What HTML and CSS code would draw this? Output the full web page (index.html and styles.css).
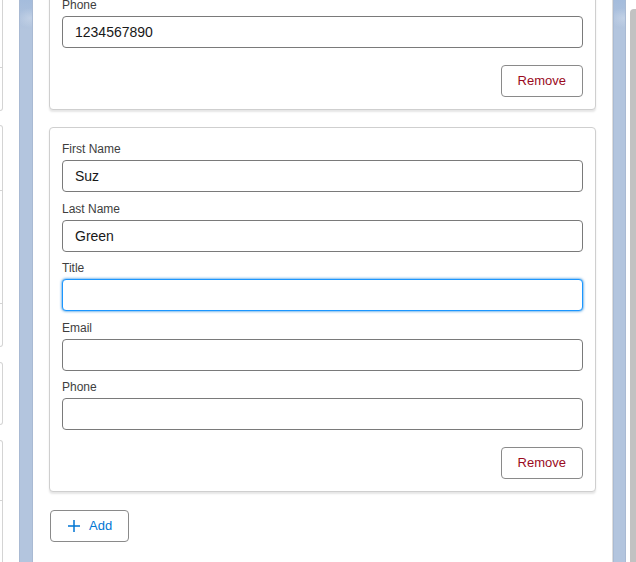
FILE: index.html
```html
<!DOCTYPE html>
<html lang="en">

<head>
    <meta charset="UTF-8">
    <meta name="viewport" content="width=device-width, initial-scale=1.0">
    <title>Contacts</title>
    <link rel="stylesheet" href="styles.css">
</head>

<body>
    <!-- clipped column on the left -->
    <div class="stubs">
        <div class="stub stub-a">
            <div class="stub-row" style="height: 77px"></div>
        </div>
        <div class="stub stub-b">
            <div class="stub-row" style="height: 65px"></div>
            <div class="stub-row" style="height: 113px"></div>
        </div>
        <div class="stub stub-c"></div>
        <div class="stub stub-d">
            <div class="stub-row" style="height: 60px"></div>
        </div>
    </div>
    <div class="strip"></div>

    <div class="panel">
        <div class="panel-inner">
            <div class="card">
                <div class="field">
                    <label class="label">First Name</label>
                    <input class="input" type="text" value="">
                </div>
                <div class="field">
                    <label class="label">Last Name</label>
                    <input class="input" type="text" value="">
                </div>
                <div class="field">
                    <label class="label">Title</label>
                    <input class="input" type="text" value="">
                </div>
                <div class="field">
                    <label class="label">Email</label>
                    <input class="input" type="text" value="">
                </div>
                <div class="field">
                    <label class="label">Phone</label>
                    <input class="input" type="text" value="1234567890">
                </div>
                <div class="actions">
                    <button class="btn btn-remove">Remove</button>
                </div>
            </div>

            <div class="card">
                <div class="field">
                    <label class="label">First Name</label>
                    <input class="input" type="text" value="Suz">
                </div>
                <div class="field">
                    <label class="label">Last Name</label>
                    <input class="input" type="text" value="Green">
                </div>
                <div class="field">
                    <label class="label">Title</label>
                    <input class="input focus" type="text" value="">
                </div>
                <div class="field">
                    <label class="label">Email</label>
                    <input class="input" type="text" value="">
                </div>
                <div class="field">
                    <label class="label">Phone</label>
                    <input class="input" type="text" value="">
                </div>
                <div class="actions">
                    <button class="btn btn-remove">Remove</button>
                </div>
            </div>

            <button class="btn btn-add">
                <svg class="btn-icon" width="14" height="14" viewBox="0 0 14 14">
                    <path d="M7 1v12M1 7h12" stroke="#0176d3" stroke-width="1.5" fill="none" />
                </svg>
                Add
            </button>
        </div>
    </div>

    <div class="strip strip-right"></div>
    <div class="gutter"></div>
    <div class="scroll"></div>
</body>

</html>
```
FILE: styles.css
```css
* {
    margin: 0;
    padding: 0;
    box-sizing: border-box;
}

html,
body {
    height: 100%;
}

body {
    display: flex;
    overflow: hidden;
    background-color: #fff;
    font-family: "Liberation Sans", Arial, sans-serif;
    color: #181818;
}

/* left clipped column */
.stubs {
    width: 19px;
    flex-shrink: 0;
    overflow: hidden;
    display: flex;
    flex-direction: column;
}

.stub {
    width: 3px;
    flex-shrink: 0;
    border: 1px solid #d4d4d4;
    border-left: 0;
    border-radius: 0 4px 4px 0;
}

.stub-row {
    border-bottom: 1px solid #d4d4d4;
}

.stub-a {
    margin-top: -10px;
    height: 121px;
}

.stub-b {
    margin-top: 14px;
    height: 222px;
}

.stub-c {
    margin-top: 15px;
    height: 63px;
}

.stub-d {
    margin-top: 15px;
    height: 200px;
}

.strip {
    width: 14px;
    flex-shrink: 0;
    background-color: #b3c5de;
    background-image:
        radial-gradient(ellipse 14px 10px at 80% 18px, rgba(255, 255, 255, 0.25), transparent),
        linear-gradient(180deg, #a4bcdc 0, #b3c5de 30px, #b3c5de 100%);
    box-shadow: inset 1px 0 0 #a9bad3, inset -1px 0 0 #a9bad3;
}

.strip-right {
    width: 13px;
}

.gutter {
    width: 4px;
    flex-shrink: 0;
    background-color: #fff;
}

.scroll {
    flex: 1;
    margin-top: 9px;
    background-color: #c2c2c2;
    border-top-left-radius: 4px;
}

/* main panel */
.panel {
    width: 580px;
    flex-shrink: 0;
    background-color: #fff;
    border-right: 1px solid #dcdcdc;
    overflow: hidden;
}

.panel-inner {
    margin-top: -255px;
    padding: 0 16px;
}

.card {
    border: 1px solid #cfcfcf;
    border-radius: 4px;
    box-shadow: 0 2px 2px rgba(0, 0, 0, 0.1);
    padding: 8px 12px 12px;
    margin-bottom: 17px;
    background-color: #fff;
}

.field {
    margin-bottom: 3.5px;
}

.label {
    display: block;
    padding-top: 4px;
    margin-bottom: 2px;
    font-size: 12px;
    line-height: 18px;
    color: #3e3e3e;
}

.input {
    display: block;
    width: 100%;
    height: 32px;
    padding: 0 16px 0 12px;
    border: 1px solid #7a7a7a;
    border-radius: 4px;
    font-family: inherit;
    font-size: 14px;
    color: #181818;
    background-color: #fff;
    outline: none;
}

.input.focus {
    border-color: #1b96ff;
    box-shadow: 0 0 3px #0176d3;
}

.actions {
    display: flex;
    justify-content: flex-end;
    padding-top: 13.5px;
}

.btn {
    display: inline-flex;
    align-items: center;
    height: 32px;
    padding: 0 16px;
    border: 1px solid #8a8a8a;
    border-radius: 4px;
    background-color: #fff;
    font-family: inherit;
    font-size: 13px;
    line-height: 30px;
}

.btn-remove {
    color: #9a0a1c;
}

.btn-add {
    margin-top: 1px;
    margin-left: 1px;
    color: #0176d3;
}

.btn-icon {
    margin-right: 8px;
}
```
